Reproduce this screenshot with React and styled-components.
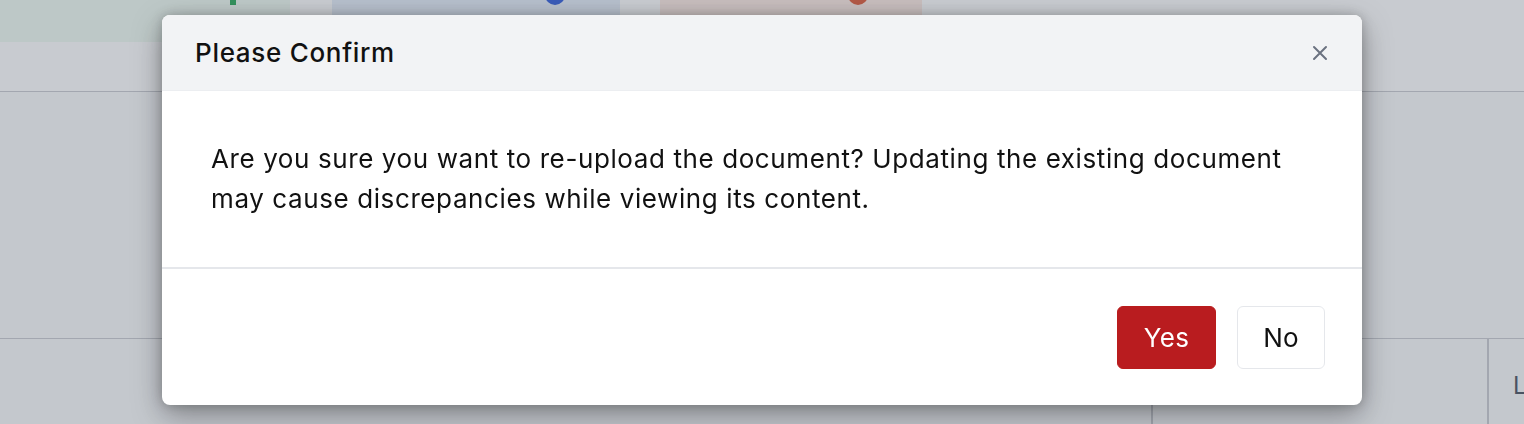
import styled, { createGlobalStyle } from 'styled-components'

const GlobalStyle = createGlobalStyle`
  html, body{
    margin: 0;
    padding: 0;
    height: 100%;
    overflow: hidden;
  }
  body{
    font-family: Inter, "Noto Sans", "Liberation Sans", sans-serif;
    background: #f9fafb;
    color: #111827;
  }
`

const Page = styled.div`
  width: 1524px;
  height: 424px;
  display: flex;
  flex-direction: column;
`

const TopBar = styled.header`
  height: 92px;
  background: #ffffff;
  border-bottom: 1px solid #c4c6cc;
  box-sizing: border-box;
`

const CardRow = styled.div`
  display: flex;
  gap: 42px;
  height: 42px;
`

const StatCard = styled.div`
  width: ${p => p.$w}px;
  margin-left: ${p => p.$ml || 0}px;
  background: ${p => p.$bg};
  display: flex;
  justify-content: flex-start;
  box-sizing: border-box;
  overflow: hidden;
`

const Dot = styled.span`
  width: 20px;
  height: 20px;
  border-radius: 50%;
  background: ${p => p.$color};
  margin-top: -15px;
  margin-left: ${p => p.$ml || 0}px;
`

const Tick = styled.span`
  width: 6px;
  height: 5px;
  background: ${p => p.$color};
  margin-left: ${p => p.$ml || 0}px;
`

const Content = styled.main`
  flex: 1;
  display: flex;
  flex-direction: column;
`

const Spacer = styled.div`
  height: 246px;
  border-bottom: 1px solid #c4c6cc;
`

const TableRow = styled.div`
  flex: 1;
  display: grid;
  grid-template-columns: 1151px 336px 1fr;
`

const Cell = styled.div`
  border-left: ${p => (p.$first ? 'none' : '2px solid #c4c6cc')};
  display: flex;
  align-items: center;
  padding-left: 24px;
  padding-top: 8px;
  font-size: 24px;
  color: #374151;
`

const Overlay = styled.div`
  position: fixed;
  inset: 0;
  background: rgba(107, 114, 128, 0.37);
  display: flex;
  justify-content: center;
  align-items: flex-start;
  padding-top: 15px;
`

const Modal = styled.div`
  width: 1200px;
  background: #ffffff;
  border-radius: 8px;
  overflow: hidden;
  box-shadow: 0 10px 30px rgba(0, 0, 0, 0.35), 0 0 12px rgba(0, 0, 0, 0.2);
`

const ModalHeader = styled.div`
  height: 76px;
  background: #f2f3f5;
  border-bottom: 1px solid #eceef1;
  box-sizing: border-box;
  display: flex;
  align-items: center;
  justify-content: space-between;
  padding: 0 34px 0 33px;
`

const Title = styled.h2`
  margin: 0;
  font-size: 26px;
  font-weight: 500;
  color: #111111;
  letter-spacing: 0.7px;
`

const CloseButton = styled.button`
  border: none;
  background: none;
  padding: 0;
  width: 16px;
  height: 16px;
  color: #6b7280;
  cursor: pointer;
  display: flex;
`

const ModalBody = styled.div`
  padding: 48px 48px 48px 49px;
  font-size: 26px;
  letter-spacing: 0.6px;
  line-height: 40px;
  color: #111111;
  border-bottom: 2px solid #e5e7eb;
`

const ModalFooter = styled.div`
  display: flex;
  justify-content: flex-end;
  gap: 21px;
  padding: 37px 37px 36px;
`

const Button = styled.button`
  height: 63px;
  padding: 0 ${p => p.$px}px;
  border-radius: 6px;
  font-family: inherit;
  font-size: 26px;
  letter-spacing: 0.3px;
  cursor: pointer;
  border: 1px solid ${p => (p.$primary ? '#b91c1c' : '#e5e7eb')};
  background: ${p => (p.$primary ? '#b91c1f' : '#ffffff')};
  color: ${p => (p.$primary ? '#ffffff' : '#111111')};
`

const CloseIcon = () => (
  <svg width="16" height="16" viewBox="0 0 16 16" fill="none" stroke="currentColor" strokeWidth="2" strokeLinecap="round">
    <path d="M2 2l12 12M14 2L2 14" />
  </svg>
)

const App = () => {
  return (
    <>
      <GlobalStyle />
      <Page>
        <TopBar>
          <CardRow>
            <StatCard $w={290} $bg="#eefaf1">
              <Tick $color="#16a34a" $ml={230} />
            </StatCard>
            <StatCard $w={288} $bg="#e3ecf8">
              <Dot $color="#1d4ed8" $ml={213} />
            </StatCard>
            <StatCard $w={262} $bg="#fde9e1" $ml={-2}>
              <Dot $color="#dc4a26" $ml={188} />
            </StatCard>
          </CardRow>
        </TopBar>
        <Content>
          <Spacer />
          <TableRow>
            <Cell $first />
            <Cell />
            <Cell>L</Cell>
          </TableRow>
        </Content>
      </Page>
      <Overlay>
        <Modal role="dialog" aria-labelledby="confirm-title">
          <ModalHeader>
            <Title id="confirm-title">Please Confirm</Title>
            <CloseButton aria-label="Close">
              <CloseIcon />
            </CloseButton>
          </ModalHeader>
          <ModalBody>
            Are you sure you want to re-upload the document? Updating the existing document may cause
            discrepancies while viewing its content.
          </ModalBody>
          <ModalFooter>
            <Button $primary $px={26}>Yes</Button>
            <Button $px={25}>No</Button>
          </ModalFooter>
        </Modal>
      </Overlay>
    </>
  )
}

export default App
